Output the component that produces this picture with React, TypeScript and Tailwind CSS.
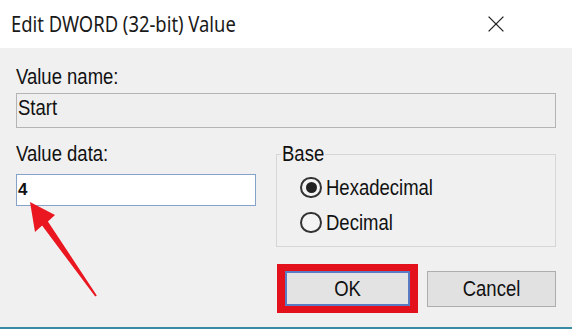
import React from "react";

// text in the shot is stretched vertically a bit, so labels get scale-y
const Txt = ({ children }: { children: React.ReactNode }) => (
  <span className="inline-block scale-y-120">{children}</span>
);

const Radio = ({ label, checked }: { label: string; checked?: boolean }) => (
  <div className="flex h-[23px] items-center">
    <div className="flex h-[21px] w-[22px] items-center justify-center rounded-full border-2 border-[#333] bg-[#f4f4f4]">
      {checked && <div className="h-[11px] w-[11px] rounded-full bg-[#222]" />}
    </div>
    <span className="ml-[4px]">
      <Txt>{label}</Txt>
    </span>
  </div>
);

export default function App() {
  return (
    <div className="relative h-[329px] w-[572px] overflow-hidden border-b-2 border-[#3b8aa3] bg-[#f0f0f0] font-['Liberation_Sans',Arial,sans-serif] text-[18.5px] leading-[22px] text-[#111]">
      {/* Title bar */}
      <div className="flex h-[48px] items-center justify-between bg-white pl-[11px] pr-[68px]">
        <span className="inline-block scale-y-120 font-['Noto_Sans',sans-serif] text-[18.4px] leading-[24px] text-[#1a1a1a]">
          Edit DWORD (32-bit) Value
        </span>
        <svg width="16" height="16" viewBox="0 0 16 16">
          <path d="M0.6 0.6L15.4 15.4M15.4 0.6L0.6 15.4" stroke="#1f1f1f" strokeWidth="1.3" />
        </svg>
      </div>

      {/* Body */}
      <div className="px-[16px] pt-[18px]">
        <div>
          <Txt>Value name:</Txt>
        </div>
        <div className="mt-[5px] h-[35px] border border-[#b4b4b4] bg-[#efefef] pl-[1px] pt-[3px]">
          <Txt>Start</Txt>
        </div>

        <div className="mt-[15px] flex gap-[20px]">
          <div className="w-[240px]">
            <div>
              <Txt>Value data:</Txt>
            </div>
            <div className="mt-[9px] h-[32px] border border-[#86a2c8] bg-white pl-[1px] pt-[4px] font-bold text-[17px]">
              4
            </div>
          </div>

          <fieldset className="h-[104px] flex-1 border border-[#d6d6d6]">
            <legend className="ml-[4px] px-[1px]">
              <Txt>Base</Txt>
            </legend>
            <div className="flex flex-col gap-[12px] pl-[23px] pt-[11px]">
              <Radio label="Hexadecimal" checked />
              <Radio label="Decimal" />
            </div>
          </fieldset>
        </div>

        <div className="mt-[17px] flex items-center justify-end gap-[9px]">
          <div className="border-x-[8px] border-y-[7px] border-[#e3111c]">
            <div className="flex h-[35px] w-[125px] items-center justify-center border-2 border-[#5a7cc4] bg-[#e3e3e3]">
              <Txt>OK</Txt>
            </div>
          </div>
          <div className="flex h-[36px] w-[129px] items-center justify-center border border-[#adadad] bg-[#e1e1e1]">
            <Txt>Cancel</Txt>
          </div>
        </div>
      </div>

      {/* red annotation arrow */}
      <svg className="pointer-events-none absolute left-0 top-0" width="572" height="329">
        <polygon
          points="30,202 55,215 47.9,221.5 96.8,295.4 95.2,296.6 42.1,225.5 35,232"
          fill="#ea1620"
        />
      </svg>
    </div>
  );
}
